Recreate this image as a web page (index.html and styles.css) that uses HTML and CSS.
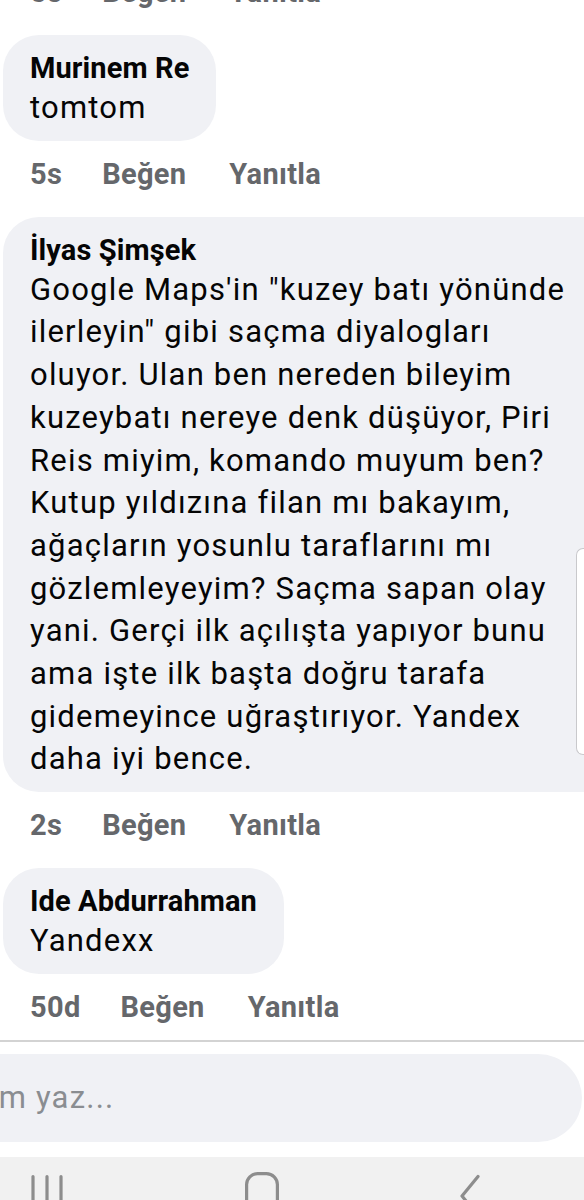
FILE: index.html
```html
<!DOCTYPE html>
<html lang="tr">
<head>
<meta charset="utf-8">
<title>Yorumlar</title>
<link rel="stylesheet" href="styles.css">
</head>
<body>
<div class="screen">
  <div class="feed">
    <div class="actions first"><span class="time">5s</span><span class="act">Beğen</span><span class="act">Yanıtla</span></div>

    <div class="comment">
      <div class="bubble">
        <div class="name">Murinem Re</div>
        <div class="text">tomtom</div>
      </div>
      <div class="actions"><span class="time">5s</span><span class="act">Beğen</span><span class="act">Yanıtla</span></div>
    </div>

    <div class="comment">
      <div class="bubble wide">
        <div class="name">İlyas Şimşek</div>
        <div class="text">Google Maps'in "kuzey batı yönünde<br>ilerleyin" gibi saçma diyalogları<br>oluyor. Ulan ben nereden bileyim<br>kuzeybatı nereye denk düşüyor, Piri<br>Reis miyim, komando muyum ben?<br>Kutup yıldızına filan mı bakayım,<br>ağaçların yosunlu taraflarını mı<br>gözlemleyeyim? Saçma sapan olay<br>yani. Gerçi ilk açılışta yapıyor bunu<br>ama işte ilk başta doğru tarafa<br>gidemeyince uğraştırıyor. Yandex<br>daha iyi bence.</div>
      </div>
      <div class="actions"><span class="time">2s</span><span class="act">Beğen</span><span class="act">Yanıtla</span></div>
    </div>

    <div class="comment">
      <div class="bubble">
        <div class="name">Ide Abdurrahman</div>
        <div class="text">Yandexx</div>
      </div>
      <div class="actions last"><span class="time">50d</span><span class="act">Beğen</span><span class="act">Yanıtla</span></div>
    </div>
  </div>

  <div class="composer">
    <div class="input">Yorum yaz...</div>
  </div>

  <nav class="navbar">
    <svg class="nav-icon recents" width="32" height="40" viewBox="0 0 32 40" aria-hidden="true">
      <path d="M2 4.5V40M16 4.5V40M30 4.5V40" fill="none" stroke="#8d8d8d" stroke-width="3.2" stroke-linecap="round"/>
    </svg>
    <svg class="nav-icon home" width="34" height="40" viewBox="0 0 34 40" aria-hidden="true">
      <rect x="1.6" y="1.6" width="30.8" height="44" rx="11" fill="none" stroke="#8d8d8d" stroke-width="3.2"/>
    </svg>
    <svg class="nav-icon back" width="20" height="40" viewBox="0 0 20 40" aria-hidden="true">
      <polyline points="18,4.5 2,24 18,43.5" fill="none" stroke="#8d8d8d" stroke-width="3.2" stroke-linecap="round" stroke-linejoin="round"/>
    </svg>
  </nav>

  <div class="scroll-thumb"></div>
</div>
</body>
</html>
```

FILE: styles.css
```css
html, body {
  margin: 0;
  padding: 0;
  background: #ffffff;
}

.screen {
  position: relative;
  width: 584px;
  height: 1200px;
  overflow: hidden;
  font-family: Roboto, "Noto Sans", "Liberation Sans", sans-serif;
  color: #050505;
  display: flex;
  flex-direction: column;
}

.feed {
  margin-top: -28px;
}

.bubble {
  display: inline-block;
  margin-left: 3px;
  padding: 14px 27px 11px 27px;
  background: #f0f1f5;
  border-radius: 36px;
}

.bubble.wide {
  width: 620px;
}

.name {
  font-size: 29px;
  font-weight: 700;
  line-height: 38px;
  letter-spacing: 0.1px;
  white-space: nowrap;
}

.text {
  font-size: 31px;
  font-weight: 400;
  line-height: 42.7px;
  letter-spacing: 1.2px;
  white-space: nowrap;
}

.actions {
  display: flex;
  gap: 43px;
  padding-left: 30px;
  margin: 13px 0 23px 0;
  height: 40px;
  font-size: 29px;
  font-weight: 700;
  line-height: 40px;
  letter-spacing: 0.3px;
  color: #65676b;
}

.actions.first {
  margin-top: 0;
}

.actions.last {
  margin-bottom: 13px;
}

.time {
  margin-right: -3px;
}

.composer {
  border-top: 2px solid #d3d3d3;
  padding: 12px 2px 15px 0;
}

.input {
  margin-left: -100px;
  height: 88px;
  padding-left: 31px;
  display: flex;
  align-items: center;
  background: #f0f1f5;
  border-radius: 0 44px 44px 0;
  font-size: 31px;
  letter-spacing: 1.2px;
  color: #8a8d91;
}

.navbar {
  flex: 1;
  background: #f1f1f1;
  display: flex;
  justify-content: space-between;
  align-items: flex-start;
  padding: 15px 104px 0 31px;
}

.nav-icon {
  display: block;
  flex: none;
}

.scroll-thumb {
  position: absolute;
  right: 0;
  top: 548px;
  width: 7px;
  height: 205px;
  background: #ffffff;
  border: 1px solid #c9c9cc;
  border-right: none;
  border-radius: 7px 0 0 7px;
}
```
